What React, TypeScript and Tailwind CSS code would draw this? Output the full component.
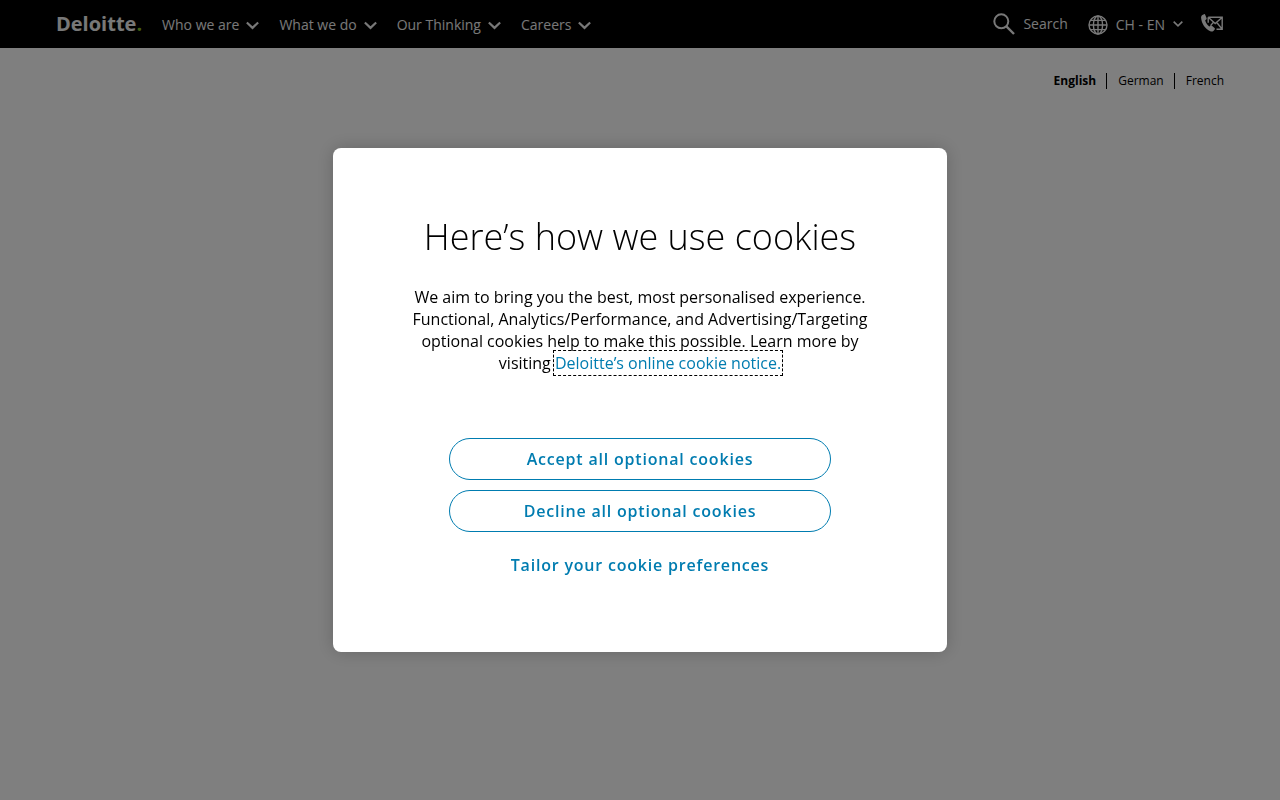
const navItems = ['Who we are', 'What we do', 'Our Thinking', 'Careers'];
const languages = ['English', 'German', 'French'];

function Chevron({ className }: { className: string }) {
  return (
    <svg viewBox="0 0 12 8" fill="none" stroke="currentColor" strokeWidth="2" className={className} aria-hidden="true">
      <path d="M0.8 1.2 6 6.2l5.2-5" />
    </svg>
  );
}

function SearchIcon() {
  return (
    <svg viewBox="0 0 22 22" fill="none" stroke="currentColor" strokeWidth="2" className="h-[22px] w-[22px]" aria-hidden="true">
      <circle cx="8.3" cy="8.3" r="7" />
      <path d="m13.4 13.4 7.6 7.6" strokeWidth="2.4" />
    </svg>
  );
}

function GlobeIcon() {
  return (
    <svg viewBox="0 0 20 20" fill="none" stroke="currentColor" strokeWidth="1.4" className="h-5 w-5" aria-hidden="true">
      <circle cx="10" cy="10" r="9" />
      <ellipse cx="10" cy="10" rx="4.6" ry="9" />
      <path d="M10 1v18M1 10h18M2.5 5.4h15M2.5 14.6h15" />
    </svg>
  );
}

function ContactIcon() {
  return (
    <svg viewBox="0 0 22 18" className="h-[18px] w-[22px]" aria-hidden="true">
      <path
        d="M1.400 1 3 .2c.5-.2 1 0 1.200.5l1.400 3.500c.2.5 0 1-.4 1.300l-1 .8c.5 2.300 1.800 4.400 4 6.100l1.300-.7c.5-.3 1-.2 1.400.1l2.700 2.200c.4.4.5.900.1 1.400l-1.300 1.500c-.8.8-2 .9-3.100.4C4.200 14.800.6 9.600.1 3.900 0 2.600.4 1.600 1.400 1Z"
        fill="currentColor"
      />
      <path d="M7.200 3.300h14v12h-5.700M7.200 3.300v5.500M7.500 3.500l6.700 6 6.800-6M21 15l-5.200-6.500M9.500 11.600l3-3.400" fill="none" stroke="currentColor" strokeWidth="1.400" />
    </svg>
  );
}

function Header() {
  return (
    <header className="flex h-12 items-center justify-between bg-black px-14 pt-0.5 text-sm text-[#f0f0f0]">
      <div className="flex items-center gap-5">
        <a href="#home" className="pb-0.5 text-xl leading-6 font-bold">
          Deloitte<span className="text-[#86bc25]">.</span>
        </a>
        <nav className="flex items-center gap-5">
          {navItems.map((item) => (
            <button key={item} type="button" className="flex items-center gap-[7px]">
              {item}
              <Chevron className="h-[9px] w-[13px]" />
            </button>
          ))}
        </nav>
      </div>

      <div className="flex items-center gap-[18px] pr-px">
        <button type="button" className="mr-0.5 flex items-center gap-2 pb-0.5">
          <SearchIcon />
          Search
        </button>
        <button type="button" className="flex items-center gap-2">
          <GlobeIcon />
          CH - EN
          <Chevron className="mb-0.5 h-2 w-2.5" />
        </button>
        <a href="#contact" aria-label="Contact us" className="pb-1">
          <ContactIcon />
        </a>
      </div>
    </header>
  );
}

function LanguageBar() {
  return (
    <ul className="flex justify-end px-14 pt-6 text-xs leading-[18px]">
      {languages.map((lang, i) => (
        <li key={lang} className="flex items-center">
          {i > 0 && <span className="mr-[11px] ml-2.5 h-4 w-px bg-black" />}
          <a href={`#${lang.toLowerCase()}`} className={i === 0 ? 'font-bold' : ''}>
            {lang}
          </a>
        </li>
      ))}
    </ul>
  );
}

function CookieDialog() {
  return (
    <div className="fixed inset-0 flex items-center justify-center bg-black/50">
      <section
        role="dialog"
        aria-modal="true"
        aria-labelledby="cookie-title"
        className="flex w-[48%] flex-col items-center rounded-lg bg-white px-19 pt-16 pb-17 text-center shadow-[0_0_18px_rgba(0,0,0,0.2)]"
      >
        <h2 id="cookie-title" className="text-4xl leading-[50px] font-light">
          Here’s how we use cookies
        </h2>
        <p className="mt-6 text-base leading-[22px]">
          We aim to bring you the best, most personalised experience. Functional, Analytics/Performance, and
          Advertising/Targeting optional cookies help to make this possible. Learn more by visiting{' '}
          <a href="#cookies" className="text-[#007cb0] outline-1 outline-offset-1 outline-black outline-dashed">
            Deloitte’s online cookie notice.
          </a>
        </p>

        <div className="mt-16 flex w-[382px] max-w-full flex-col gap-2.5 text-base font-semibold tracking-wider text-[#007cb0]">
          <button type="button" className="h-[42px] rounded-full border border-[#007cb0]">
            Accept all optional cookies
          </button>
          <button type="button" className="h-[42px] rounded-full border border-[#007cb0]">
            Decline all optional cookies
          </button>
          <button type="button" className="mt-1 h-[38px]">
            Tailor your cookie preferences
          </button>
        </div>
      </section>
    </div>
  );
}

export default function App() {
  return (
    <div className="min-h-screen bg-white font-['Open_Sans',sans-serif] text-black">
      <Header />
      <LanguageBar />
      <CookieDialog />
    </div>
  );
}
